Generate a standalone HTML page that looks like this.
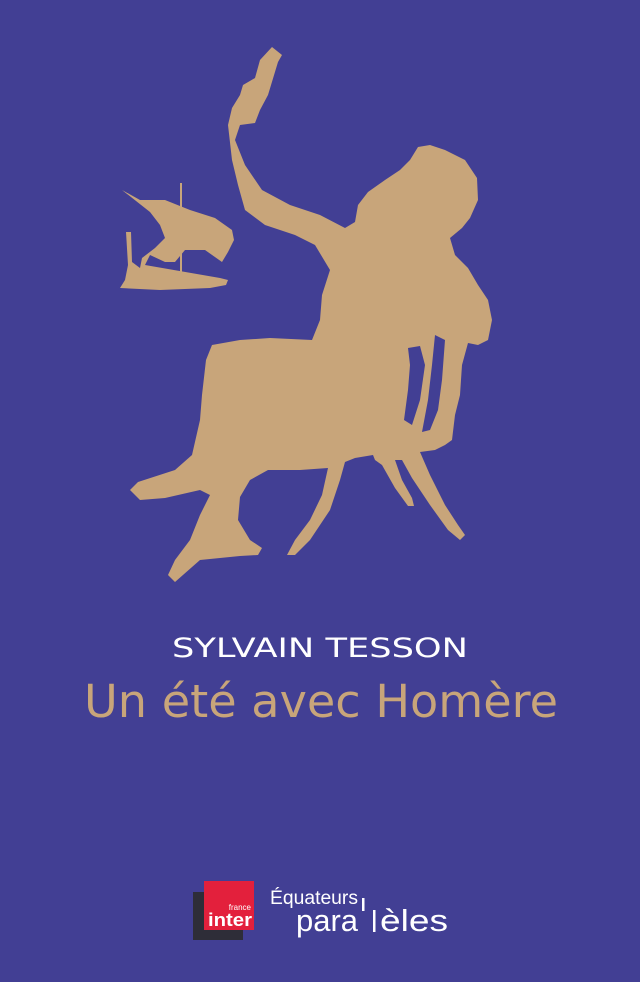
<!DOCTYPE html>
<html><head><meta charset="utf-8"><style>
html,body{margin:0;padding:0;background:#423f94;}
svg{display:block}
</style></head><body>
<svg width="640" height="982" viewBox="0 0 640 982" xmlns="http://www.w3.org/2000/svg">
<rect width="640" height="982" fill="#423f94"/>
<g fill="#c8a57a">
<path d="M122,190 L140,200 L165,200 L190,210 L215,218 L232,230 L234,240 L228,252 L222,262 L205,250 L185,250 L175,262 L165,262 L150,255 L145,265 L220,278 L228,280 L226,285 L210,288 L160,290 L120,288 L125,280 L128,265 L126,232 L131,232 L132,262 L140,268 L142,258 L155,248 L165,238 L160,225 L150,212 Z"/>
<rect x="180" y="183" width="2" height="95"/>
<path d="M272,47 L282,55 L278,62 L268,95 L260,110 L255,123 L240,125 L235,140 L245,165 L262,190 L290,205 L320,215 L345,228 L355,222 L358,205 L368,192 L385,180 L400,170 L410,160 L418,147 L430,145 L445,150 L465,160 L477,178 L478,200 L470,218 L462,228 L450,238 L455,255 L468,268 L478,285 L488,300 L492,320 L488,340 L478,345 L468,343 L462,365 L460,395 L455,415 L452,440 L445,445 L435,450 L420,452 L430,475 L445,505 L458,525 L465,535 L460,540 L448,530 L430,505 L412,478 L402,460 L395,460 L402,480 L412,498 L414,506 L408,506 L395,488 L382,465 L375,460 L373,455 L355,458 L345,462 L340,480 L330,510 L310,540 L295,555 L287,555 L295,540 L310,520 L322,495 L328,468 L300,470 L268,470 L250,480 L240,497 L238,520 L250,540 L262,548 L258,555 L240,556 L200,560 L175,582 L168,575 L175,560 L190,540 L200,515 L210,495 L200,490 L165,498 L140,500 L130,490 L138,482 L175,470 L192,455 L200,420 L202,395 L206,360 L212,345 L240,340 L270,338 L312,340 L320,320 L322,295 L330,270 L315,245 L295,235 L265,225 L245,210 L238,185 L232,160 L228,125 L232,108 L240,95 L243,85 L255,78 L260,60 Z"/>
<path fill="#423f94" d="M408,348 L420,346 L425,365 L420,400 L412,425 L404,420 L408,390 L410,365 Z"/>
<path fill="#423f94" d="M435,335 L445,340 L442,380 L438,410 L430,430 L422,432 L428,400 L432,365 Z"/>
</g>
<text x="320" y="657" text-anchor="middle" font-family="DejaVu Sans, sans-serif" font-size="27" fill="#ffffff" textLength="296" lengthAdjust="spacingAndGlyphs">SYLVAIN TESSON</text>
<text x="321" y="717" text-anchor="middle" font-family="DejaVu Sans, sans-serif" font-size="45" fill="#c8a57a" textLength="474" lengthAdjust="spacingAndGlyphs">Un été avec Homère</text>
<rect x="193" y="892" width="50" height="48" fill="#2e2d38"/>
<rect x="204" y="881" width="50" height="49" fill="#e3203c"/>
<text x="251" y="910" text-anchor="end" font-family="Liberation Sans, sans-serif" font-size="8" fill="#fff">france</text>
<text x="252" y="926" text-anchor="end" font-family="Liberation Sans, sans-serif" font-weight="bold" font-size="18" fill="#fff" textLength="44" lengthAdjust="spacingAndGlyphs">inter</text>
<text x="270" y="904" font-family="Liberation Sans, sans-serif" font-size="19" fill="#fff" textLength="88" lengthAdjust="spacingAndGlyphs">Équateurs</text>
<rect x="362" y="898" width="2.5" height="13" fill="#fff"/>
<rect x="373" y="910" width="2.5" height="22" fill="#fff"/>
<text x="296" y="931" font-family="Liberation Sans, sans-serif" font-size="31" fill="#fff" textLength="62" lengthAdjust="spacingAndGlyphs">para</text>
<text x="380" y="931" font-family="Liberation Sans, sans-serif" font-size="31" fill="#fff" textLength="68" lengthAdjust="spacingAndGlyphs">èles</text>
</svg>
</body></html>
